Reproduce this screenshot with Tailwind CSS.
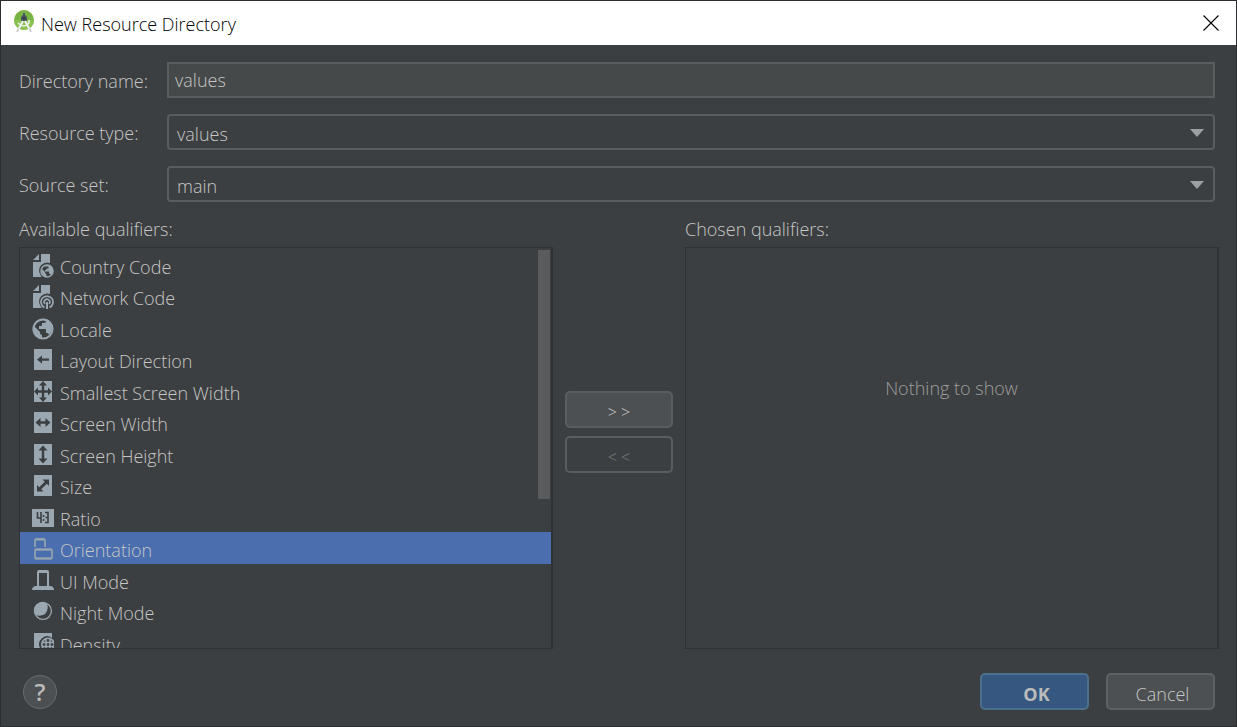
<!DOCTYPE html>
<html lang="en">
<head>
    <meta charset="UTF-8">
    <meta name="viewport" content="width=device-width, initial-scale=1.0">
    <title>New Resource Directory</title>
    <script src="https://cdn.jsdelivr.net/npm/@tailwindcss/browser@4"></script>
</head>
<body class="min-h-screen flex flex-col bg-[#3c3f41] border border-[#2b2d2e] text-[#c6c6c6] text-[18px] leading-6 font-light font-['Open_Sans','Noto_Sans',sans-serif]">
    <!-- title bar -->
    <header class="h-11 shrink-0 flex items-center bg-white text-black pl-3 pr-[17px]">
        <svg class="w-6 h-6 mb-1" viewBox="0 0 24 24" aria-hidden="true">
            <circle cx="11" cy="11" r="10" fill="#78b543"/>
            <path d="M1 11a10 10 0 0 0 20 0z" fill="#8cc152"/>
            <path d="M8 9a3 3 0 0 1 6 0v3H8z" fill="#4d5a5f"/>
            <path d="M10 4h2v3h-2z" fill="#4d5a5f"/>
            <path d="M10 12 4 23M12 12l6 11" stroke="#f1f1f1" stroke-width="2" fill="none"/>
            <path d="M5 14q6 6 11 0V11" stroke="#f1f1f1" stroke-width="1.600" fill="none"/>
            <path d="M5.500 19.500 4 23M16.500 19.500l1.500 3.500" stroke="#c4c8ca" stroke-width="1.500"/>
            <circle cx="11" cy="9.500" r="2" fill="#37474f"/>
        </svg>
        <h1 class="ml-1 pt-0.5">New Resource Directory</h1>
        <button type="button" aria-label="Close" class="ml-auto">
            <svg class="w-4 h-4" viewBox="0 0 16 16" fill="none" stroke="#000" stroke-width="1.100"><path d="M.5.5l15 15M15.500.5l-15 15"/></svg>
        </button>
    </header>

    <main class="flex-1 flex flex-col pl-[18px] pr-[17px] pt-[17px] pb-4">
        <div class="grid grid-cols-[148px_1fr] gap-y-4 items-center pr-1">
            <label for="dirName" class="pt-0.5">Directory name:</label>
            <input id="dirName" type="text" value="values" class="h-9 w-full bg-[#45494a] border-2 border-[#5a5d5e] pl-1.5 outline-none">

            <label for="resType" class="pt-0.5">Resource type:</label>
            <div class="relative">
                <select id="resType" class="block h-9 w-full appearance-none bg-[#3c3f41] border-2 border-[#5a5d5e] rounded pl-2 pt-1 outline-none">
                    <option>values</option>
                    <option>layout</option>
                    <option>drawable</option>
                    <option>menu</option>
                </select>
                <svg class="absolute right-[11px] top-[15px] w-3.5 h-2 pointer-events-none" viewBox="0 0 14 8" fill="#9da0a2"><path d="M0 0h14L7 8z"/></svg>
            </div>

            <label for="sourceSet" class="pt-0.5">Source set:</label>
            <div class="relative">
                <select id="sourceSet" class="block h-9 w-full appearance-none bg-[#3c3f41] border-2 border-[#5a5d5e] rounded pl-2 pt-1 outline-none">
                    <option>main</option>
                    <option>debug</option>
                    <option>release</option>
                </select>
                <svg class="absolute right-[11px] top-[15px] w-3.5 h-2 pointer-events-none" viewBox="0 0 14 8" fill="#9da0a2"><path d="M0 0h14L7 8z"/></svg>
            </div>
        </div>

        <div class="flex-1 flex mt-[15px]">
            <!-- available -->
            <section class="flex-1 flex flex-col">
                <h2 id="availLabel" class="mb-1.5">Available qualifiers:</h2>
                <div class="relative flex-1 border border-r-2 border-[#2f3132] overflow-hidden min-h-[400px]">
                    <ul role="listbox" aria-labelledby="availLabel" class="absolute inset-0 pt-px">
                        <li role="option" class="flex items-center h-[31px] pl-3 gap-1.5">
                            <svg class="w-[22px] h-6 mt-0.5" viewBox="0 0 22 24"><path d="M9 0h9v9A8 8 0 0 0 8 20l1.500 3H1V8h8zM7 0v6H1z" fill="#9aa7b0"/><circle cx="15" cy="17" r="6" fill="none" stroke="#9aa7b0" stroke-width="1.600"/><path d="M9.500 14.500l3.500 3.500v1l1.500 1.500V23Q9 21 9.500 14.500zM13.500 11h4.500q3 2 3 7l-2 3q-.5-1.500-2-1.500V17.500h-4v-1.500h1.500v-1.500h2v-2h-3z" fill="#9aa7b0"/></svg>
                            <span class="pt-1">Country Code</span>
                        </li>
                        <li role="option" class="flex items-center h-8 pl-3 gap-1.5">
                            <svg class="w-[22px] h-6 mt-0.5" viewBox="0 0 22 24"><path d="M9 0h9v9A8 8 0 0 0 8 20l1.500 3H1V8h8zM7 0v6H1z" fill="#9aa7b0"/><path d="M12.500 22.500a6 6 0 1 1 5 0M13 19a2.800 2.800 0 1 1 4 0" fill="none" stroke="#9aa7b0" stroke-width="1.700"/><path d="M14 17h2v7h-2z" fill="#9aa7b0"/></svg>
                            <span class="pt-1">Network Code</span>
                        </li>
                        <li role="option" class="flex items-center h-[31px] pl-3 gap-1.5">
                            <svg class="w-[22px] h-6 mt-0.5" viewBox="0 0 22 24"><circle cx="11" cy="12" r="9.600" fill="none" stroke="#9aa7b0" stroke-width="2"/><path d="M2 9l6 6v1q0 2 2 2v3.500C5 21 1 17 2 9zM9 2h5v2q0 2-2 2h-2v2q0 1-1 1H7v3h6q1 0 1 1v3h1q1.500 0 2 2 6-7 1-13-3-4-9-3z" fill="#9aa7b0"/></svg>
                            <span class="pt-1">Locale</span>
                        </li>
                        <li role="option" class="flex items-center h-8 pl-3 gap-1.5">
                            <svg class="w-[22px] h-6 mt-0.5" viewBox="0 0 22 24"><path d="M2 1h18v21H2z" fill="#9aa7b0"/><path d="M5 11.500l5-4v3h7v2.200h-7v3z" fill="#3c3f41"/></svg>
                            <span class="pt-1">Layout Direction</span>
                        </li>
                        <li role="option" class="flex items-center h-[31px] pl-3 gap-1.5">
                            <svg class="w-[22px] h-6 mt-0.5" viewBox="0 0 22 24"><path d="M2 1h18v21H2z" fill="#9aa7b0"/><path d="M11 1l4 4.500h-2.800v4.800h3.800V7.500l4 4-4 4v-2.800h-3.800v4.800H15L11 22l-4-4.500h2.800v-4.800H6v2.800l-4-4 4-4v2.800h3.800V5.500H7z" fill="#3c3f41"/></svg>
                            <span class="pt-1">Smallest Screen Width</span>
                        </li>
                        <li role="option" class="flex items-center h-8 pl-3 gap-1.5">
                            <svg class="w-[22px] h-6 mt-0.5" viewBox="0 0 22 24"><path d="M2 1h18v21H2z" fill="#9aa7b0"/><path d="M3.500 11.500l5-4.500v3.300h5V7l5 4.500-5 4.500v-3.300h-5V16z" fill="#3c3f41"/></svg>
                            <span class="pt-1">Screen Width</span>
                        </li>
                        <li role="option" class="flex items-center h-[31px] pl-3 gap-1.5">
                            <svg class="w-[22px] h-6 mt-0.5" viewBox="0 0 22 24"><path d="M2 1h18v21H2z" fill="#9aa7b0"/><path d="M11 2.500L15.500 7.500h-3.300v8h3.300L11 20.500l-4.500-5h3.300v-8H6.500z" fill="#3c3f41"/></svg>
                            <span class="pt-1">Screen Height</span>
                        </li>
                        <li role="option" class="flex items-center h-8 pl-3 gap-1.5">
                            <svg class="w-[22px] h-6 mt-0.5" viewBox="0 0 22 24"><path d="M2 1h18v21H2z" fill="#9aa7b0"/><path d="M10.500 5.500H17V12l-2.200-2.200-5.600 5.400L11.500 17.500H5V11l2.200 2.200 5.600-5.400z" fill="#3c3f41"/></svg>
                            <span class="pt-1">Size</span>
                        </li>
                        <li role="option" class="flex items-center h-[31px] pl-3 gap-1.5">
                            <svg class="w-[22px] h-6 mt-0.5" viewBox="0 0 22 24"><path d="M0 3h22v18H0z" fill="#9aa7b0"/><path d="M5.500 6v6h3.500M9 6v11M13 6.500h3v10h-3M13.500 11.500H16" fill="none" stroke="#3c3f41" stroke-width="1.600"/><path d="M10.800 9h1.500v2h-1.500zM10.800 13h1.500v2h-1.500z" fill="#3c3f41"/></svg>
                            <span class="pt-1">Ratio</span>
                        </li>
                        <li role="option" aria-selected="true" class="flex items-center h-8 pl-3 gap-1.5 bg-[#4b6eaf]">
                            <svg class="w-[22px] h-6 mt-0.5" viewBox="0 0 22 24" fill="none" stroke="#9aa7b0" stroke-width="1.600"><path d="M3 10V3.500Q3 2 4 2h8q1 0 1 1.500V10"/><rect x="3" y="12.500" width="17" height="9" rx="1"/><path d="M3 21.500h17M3 12.500h17M4 2.500h8" stroke-width="2.200"/></svg>
                            <span class="pt-1">Orientation</span>
                        </li>
                        <li role="option" class="flex items-center h-[31px] pl-3 gap-1.5">
                            <svg class="w-[22px] h-6 mt-0.5" viewBox="0 0 22 24"><path d="M5 17V3q0-2 2-2h8q2 0 2 2v14h2q3 1 3 4H0Q0 18 3 17zM7 4v13h8V4z" fill="#9aa7b0" fill-rule="evenodd"/></svg>
                            <span class="pt-1">UI Mode</span>
                        </li>
                        <li role="option" class="flex items-center h-8 pl-3 gap-1.5">
                            <svg class="w-[22px] h-6 mt-0.5" viewBox="0 0 22 24"><circle cx="11" cy="11" r="8.400" fill="none" stroke="#9aa7b0" stroke-width="1.300"/><path d="M14.500 3A8.500 8.500 0 0 1 3 14.500 8.500 8.500 0 0 1 14.500 3z" fill="#9aa7b0"/><circle cx="9" cy="9" r="6.300" fill="#9aa7b0"/></svg>
                            <span class="pt-1">Night Mode</span>
                        </li>
                        <li role="option" class="flex items-center h-[31px] pl-3 gap-1.5">
                            <svg class="w-[22px] h-6 mt-0.5" viewBox="0 0 22 24"><path d="M2 1h18v5A8 8 0 0 0 8 16v5H2z" fill="#9aa7b0"/><circle cx="16" cy="12.500" r="6.200" fill="none" stroke="#9aa7b0" stroke-width="1.600"/><path d="M14 6v13M18 6v13M10 10.500h12M10 14.500h12" stroke="#9aa7b0" stroke-width="1.500"/></svg>
                            <span class="pt-1">Density</span>
                        </li>
                    </ul>
                    <div class="absolute right-px top-0.5 w-3 h-[249px] bg-[#5a5b5d]"></div>
                </div>
            </section>

            <div class="w-[132px] shrink-0 flex flex-col justify-center items-center gap-2 pb-0.5">
                <button type="button" class="w-[108px] h-[37px] rounded-[5px] border-2 border-[#5a5d5e] bg-[#4c5052] text-[16px] pt-1">&gt; &gt;</button>
                <button type="button" disabled class="w-[108px] h-[37px] rounded-[5px] border-2 border-[#5a5d5e] text-[#7c7c7c] text-[16px] pt-1">&lt; &lt;</button>
            </div>

            <!-- chosen -->
            <section class="flex-1 flex flex-col">
                <h2 class="mb-1.5">Chosen qualifiers:</h2>
                <div class="flex-1 border border-r-2 border-[#2f3132] pt-32 text-center text-[#9c9e9f]">Nothing to show</div>
            </section>
        </div>

        <footer class="flex items-center mt-6 pl-1 pr-1">
            <button type="button" aria-label="Help" class="w-[34px] h-[34px] rounded-full border border-[#6a6d6e] bg-[#4c5052] text-[#bbbbbb] text-[24px] leading-none font-semibold">?</button>
            <button type="button" class="ml-auto w-[109px] h-[37px] rounded-[5px] border-2 border-[#4c708c] bg-[#365880] text-[#bbbbbb] font-bold pt-1 pl-1">OK</button>
            <button type="button" class="ml-[17px] w-[109px] h-[37px] rounded-[5px] border-2 border-[#5e6162] bg-[#4c5052] pt-1 pl-1">Cancel</button>
        </footer>
    </main>
</body>
</html>
